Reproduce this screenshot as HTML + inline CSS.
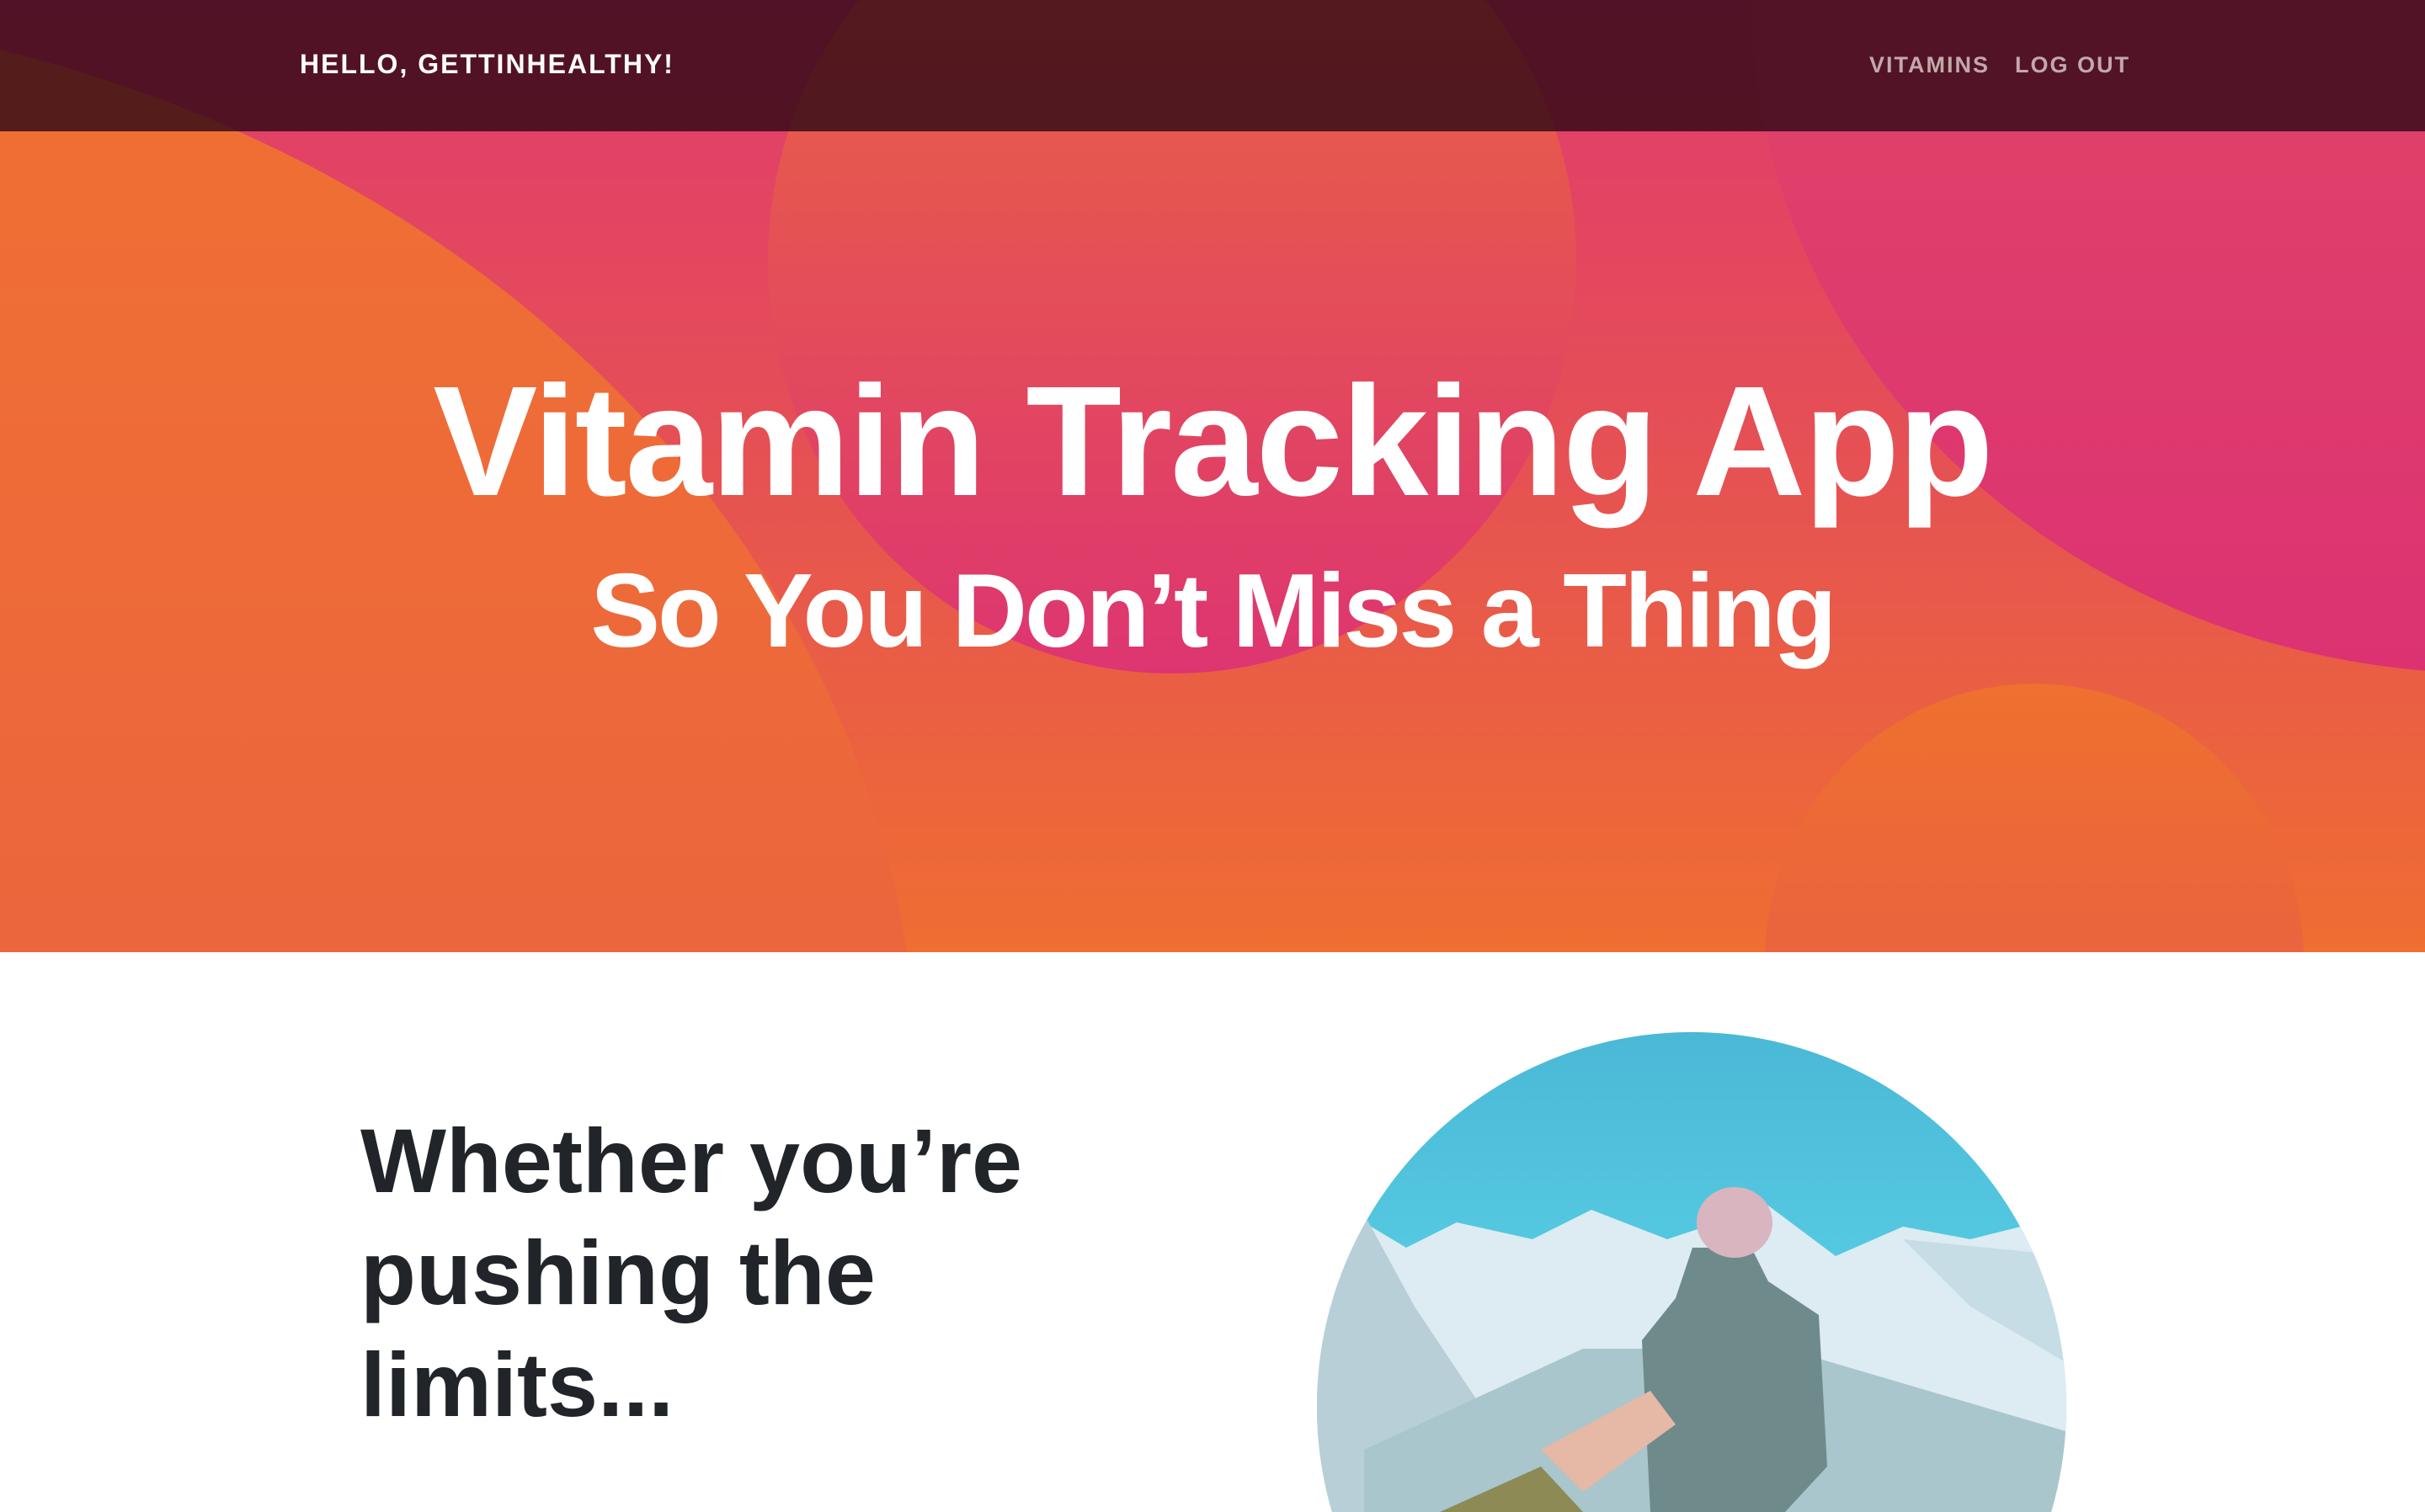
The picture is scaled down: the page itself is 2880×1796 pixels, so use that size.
<!DOCTYPE html>
<html><head><meta charset="utf-8"><style>
html,body{margin:0;padding:0;width:2880px;height:1796px;overflow:hidden;background:#fff;font-family:"Liberation Sans",sans-serif;position:relative;}
.hero{position:absolute;left:0;top:0;width:2880px;height:1131px;overflow:hidden;}
.nav{position:absolute;left:0;top:0;width:2880px;height:156px;background:rgba(45,8,20,0.8);}
.nav .brand{position:absolute;left:356px;top:58px;color:#fff;font-weight:bold;font-size:32px;letter-spacing:2px;}
.nav .links{position:absolute;left:2220px;top:62px;color:#c2a9ab;font-weight:bold;font-size:27px;letter-spacing:2px;}
.nav .links span{margin-right:30px;}
h1{position:absolute;left:0;width:2880px;text-align:center;top:432px;margin:0;color:#fff;font-size:186px;letter-spacing:-2px;font-weight:bold;line-height:1;}
h2{position:absolute;left:0;width:2880px;text-align:center;top:664px;margin:0;color:#fff;font-size:124px;letter-spacing:-3px;font-weight:bold;line-height:1;}
h3{position:absolute;left:428px;top:1312px;margin:0;color:#212529;font-size:108px;line-height:133px;letter-spacing:0px;font-weight:bold;}
.pic{position:absolute;left:1560px;top:1222px;width:900px;height:574px;overflow:hidden;}
</style></head><body>
<div class="hero">
<svg width="2880" height="1131" style="position:absolute;left:0;top:0">
<defs>
<linearGradient id="bg" x1="0" y1="0" x2="0" y2="1"><stop offset="0" stop-color="#e03b6d"/><stop offset="0.45" stop-color="#e54f56"/><stop offset="1" stop-color="#ef6e31"/></linearGradient>
<linearGradient id="lf" x1="0" y1="0" x2="0" y2="1"><stop offset="0" stop-color="#f07032"/><stop offset="1" stop-color="#e6584c"/></linearGradient>
<linearGradient id="ct" x1="0" y1="0" x2="0" y2="1"><stop offset="0" stop-color="#ec6a3c"/><stop offset="1" stop-color="#dd3571"/></linearGradient>
<linearGradient id="rt" x1="0" y1="0" x2="0" y2="1"><stop offset="0" stop-color="#e4565e"/><stop offset="1" stop-color="#dc3272"/></linearGradient>
<linearGradient id="br" x1="0" y1="0" x2="0" y2="1"><stop offset="0" stop-color="#ef702f"/><stop offset="1" stop-color="#e5564d"/></linearGradient>
</defs>
<rect width="2880" height="1131" fill="url(#bg)"/>
<ellipse cx="-410" cy="1300" rx="1500" ry="1290" fill="url(#lf)"/>
<ellipse cx="1392" cy="310" rx="480" ry="490" fill="url(#ct)"/>
<ellipse cx="2960" cy="0" rx="880" ry="800" fill="url(#rt)"/>
<ellipse cx="2416" cy="1142" rx="320" ry="330" fill="url(#br)"/>
</svg>
<div class="nav"><div class="brand">HELLO, GETTINHEALTHY!</div><div class="links"><span>VITAMINS</span>LOG OUT</div></div>
<h1>Vitamin Tracking App</h1>
<h2>So You Don’t Miss a Thing</h2>
</div>
<h3>Whether you’re<br>pushing the<br>limits...</h3>
<div class="pic">
<svg width="900" height="574" style="display:block">
<defs>
<clipPath id="c"><ellipse cx="449" cy="449" rx="445" ry="445"/></clipPath>
<linearGradient id="sky" x1="0" y1="0" x2="0" y2="1"><stop offset="0" stop-color="#4ab8d6"/><stop offset="1" stop-color="#62dcee"/></linearGradient>
</defs>
<g clip-path="url(#c)">
<rect width="900" height="574" fill="url(#sky)"/>
<polygon points="0,200 60,230 110,260 170,230 260,250 330,215 420,250 540,210 620,270 700,235 780,250 900,220 900,574 0,574" fill="#dcecf2"/>
<polygon points="0,200 60,220 120,330 200,450 160,574 0,574" fill="#b8cfd8"/>
<polygon points="700,250 900,270 900,400 780,330" fill="#c6dde6"/>
<polygon points="60,500 320,380 560,380 900,480 900,574 60,574" fill="#a9c6cc"/>
<polygon points="450,260 520,260 540,300 600,340 610,520 560,574 400,574 390,370 430,320" fill="#6f8a8a"/>
<ellipse cx="500" cy="230" rx="45" ry="42" fill="#d8b5bf"/>
<polygon points="270,500 400,430 430,470 320,550" fill="#e6b8a6"/>
<polygon points="150,574 270,520 320,574" fill="#8d8a55"/>
</g>
</svg>
</div>
</body></html>
